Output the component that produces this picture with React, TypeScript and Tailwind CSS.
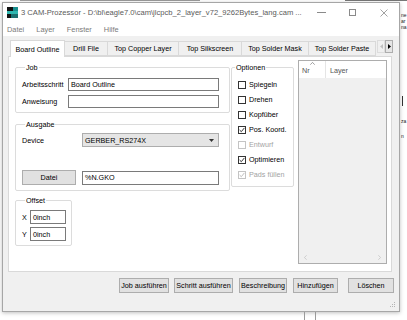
import React from 'react';

const font = "font-['Liberation_Sans',Arial,sans-serif]";

const tabs = [
  { label: 'Board Outline', w: 'w-[55px]', active: true },
  { label: 'Drill File', w: 'w-[43px]' },
  { label: 'Top Copper Layer', w: 'w-[71px]' },
  { label: 'Top Silkscreen', w: 'w-[63px]' },
  { label: 'Top Solder Mask', w: 'w-[67px]' },
  { label: 'Top Solder Paste', w: 'w-[67px]' },
];

const options = [
  { label: 'Spiegeln' },
  { label: 'Drehen' },
  { label: 'Kopfüber' },
  { label: 'Pos. Koord.', checked: true },
  { label: 'Entwurf', disabled: true },
  { label: 'Optimieren', checked: true },
  { label: 'Pads füllen', checked: true, disabled: true },
];

const CheckRow = ({ label, checked, disabled }: { label: string; checked?: boolean; disabled?: boolean }) => (
  <div className="flex items-center h-[15px] pl-[6px]">
    <div
      className={`w-[8px] h-[8px] border bg-white flex items-center justify-center ${
        disabled ? 'border-[#c4c4c4]' : 'border-[#333333]'
      }`}
    >
      {checked && (
        <svg width="6" height="6" viewBox="0 0 6 6">
          <path d="M0.6 3 L2.3 4.7 L5.4 0.9" fill="none" stroke={disabled ? '#b8b8b8' : '#222'} strokeWidth="0.9" />
        </svg>
      )}
    </div>
    <span className={`ml-[3px] ${disabled ? 'text-[#a3a3a3]' : 'text-black'}`}>{label}</span>
  </div>
);

const Group = ({ title, className, children }: { title: string; className?: string; children: React.ReactNode }) => (
  <fieldset className={`border border-[#dcdcdc] rounded-[2px] min-w-0 ${className ?? ''}`}>
    <legend className="ml-[3px] px-[1px] leading-[9px] text-black">{title}</legend>
    {children}
  </fieldset>
);

const Input = ({ value, className }: { value?: string; className: string }) => (
  <div className={`border border-[#7a7a7a] bg-white flex items-center pl-[2px] ${className}`}>{value}</div>
);

const Button = ({ label, className }: { label: string; className: string }) => (
  <div className={`h-[15px] border border-[#adadad] bg-[#e1e1e1] flex items-center justify-center ${className}`}>
    {label}
  </div>
);

export default function App() {
  return (
    <div className={`w-[407px] h-[320px] bg-white overflow-hidden flex flex-col text-[7.2px] leading-[9px] ${font}`}>
      {/* bits of the document behind, peeking out on top */}
      <div className="h-[2px] flex items-start">
        <div className="ml-[20px] w-[180px] h-[1px] bg-[#9a9a9a]" />
        <div className="ml-[145px] w-[62px] h-[1px] bg-[#777]" />
      </div>

      <div className="flex">
        <div className="w-[2px]" />

        {/* window */}
        <div className="w-[398px] h-[310px] border border-[#a6a6a6] bg-[#f0f0f0] flex flex-col shadow-[0_1px_4px_rgba(0,0,0,0.25)]">
          <div className="h-[19px] bg-white flex items-center">
            <svg className="ml-[4px]" width="11" height="11" viewBox="0 0 11 11">
              <rect x="0" y="0" width="6" height="4" fill="#111" />
              <rect x="6" y="0" width="5" height="4" fill="#1b8f8f" />
              <rect x="0" y="4" width="11" height="3" fill="#2fb7b0" />
              <rect x="0" y="7" width="4" height="4" fill="#111" />
              <rect x="4" y="7" width="7" height="4" fill="#1b6f6f" />
            </svg>
            <span className="ml-[3px] text-[7.6px] text-[#5a5a5a] whitespace-nowrap">
              3 CAM-Prozessor - D:\bl\eagle7.0\cam\jlcpcb_2_layer_v72_9262Bytes_lang.cam ...
            </span>
            <div className="flex-1" />
            <div className="w-[31px] flex justify-center">
              <div className="w-[9px] h-[1px] bg-[#8a8a8a]" />
            </div>
            <div className="w-[31px] flex justify-center">
              <div className="w-[7px] h-[7px] border border-[#8a8a8a]" />
            </div>
            <div className="w-[31px] flex justify-center">
              <svg width="8" height="8" viewBox="0 0 8 8">
                <path d="M0.5 0.5 L7.5 7.5 M7.5 0.5 L0.5 7.5" stroke="#8a8a8a" strokeWidth="0.8" />
              </svg>
            </div>
          </div>

          <div className="h-[14px] bg-white flex items-center text-[7.4px] text-[#7a7a7a]">
            <span className="ml-[4px]">Datei</span>
            <span className="ml-[12px]">Layer</span>
            <span className="ml-[12px]">Fenster</span>
            <span className="ml-[12px]">Hilfe</span>
          </div>

          {/* tabs */}
          <div className="h-[20px] flex items-end pl-[7px]">
            {tabs.map((t) =>
              t.active ? (
                <div
                  key={t.label}
                  className={`${t.w} h-[17px] -mb-[1px] bg-white border border-b-0 border-[#d9d9d9] flex items-center justify-center whitespace-nowrap relative z-10`}
                >
                  {t.label}
                </div>
              ) : (
                <div
                  key={t.label}
                  className={`${t.w} h-[15px] border border-l-0 border-[#d9d9d9] bg-[#f0f0f0] flex items-center justify-center whitespace-nowrap overflow-hidden`}
                >
                  {t.label}
                </div>
              )
            )}
            <div className="h-[15px] flex self-end mb-[1px] ml-[1px]">
              <div className="w-[8px] h-[13px] border border-[#dcdcdc] bg-[#f0f0f0] flex items-center justify-center">
                <svg width="3" height="5" viewBox="0 0 3 5">
                  <path d="M3 0 L0 2.5 L3 5 Z" fill="#c0c0c0" />
                </svg>
              </div>
              <div className="w-[8px] h-[13px] border border-[#adadad] bg-[#e5e5e5] flex items-center justify-center">
                <svg width="3" height="5" viewBox="0 0 3 5">
                  <path d="M0 0 L3 2.5 L0 5 Z" fill="#000" />
                </svg>
              </div>
            </div>
          </div>

          {/* tab panel */}
          <div className="ml-[5px] w-[384px] h-[216px] bg-white border border-[#d9d9d9] flex pt-[3px] pl-[6px]">
            <div className="w-[215px] mt-[3px] flex flex-col">
              <Group title="Job" className="pt-[6px] pb-[4px] pl-[6px]">
                <div className="flex items-center h-[13px]">
                  <span className="w-[46px]">Arbeitsschritt</span>
                  <Input value="Board Outline" className="w-[151px] h-[13px]" />
                </div>
                <div className="flex items-center h-[13px] mt-[4px]">
                  <span className="w-[46px]">Anweisung</span>
                  <Input className="w-[151px] h-[13px]" />
                </div>
              </Group>

              <Group title="Ausgabe" className="mt-[7px] pt-[4px] pb-[5px] pl-[6px]">
                <div className="flex items-center h-[14px]">
                  <span className="w-[60px]">Device</span>
                  <div className="w-[137px] h-[14px] border border-[#adadad] bg-[#e5e5e5] flex items-center pl-[2px]">
                    <span className="flex-1">GERBER_RS274X</span>
                    <svg className="mr-[4px]" width="5" height="3" viewBox="0 0 5 3">
                      <path d="M0 0 L5 0 L2.5 3 Z" fill="#333" />
                    </svg>
                  </div>
                </div>
                <div className="flex items-center h-[15px] mt-[23px]">
                  <Button label="Datei" className="w-[54px]" />
                  <Input value="%N.GKO" className="ml-[6px] w-[137px] h-[14px]" />
                </div>
              </Group>

              <Group title="Offset" className="w-[57px] mt-[5px] pt-[5px] pb-[4px] pl-[6px]">
                <div className="flex items-center h-[14px]">
                  <span className="w-[8px]">X</span>
                  <Input value="0inch" className="w-[36px] h-[14px]" />
                </div>
                <div className="flex items-center h-[14px] mt-[3px]">
                  <span className="w-[8px]">Y</span>
                  <Input value="0inch" className="w-[36px] h-[14px]" />
                </div>
              </Group>
            </div>

            <Group title="Optionen" className="w-[63px] h-fit mt-[3px] ml-[1px] pt-[5px] pb-[4px]">
              {options.map((o) => (
                <CheckRow key={o.label} {...o} />
              ))}
            </Group>

            {/* layer list */}
            <div className="ml-[4px] w-[89px] h-[204px] border border-[#adadad] bg-[#f0f0f0] flex flex-col">
              <div className="h-[17px] bg-white flex">
                <div className="w-[27px] border-r border-[#e5e5e5] flex flex-col pl-[3px]">
                  <svg className="ml-[8px] mt-[1px]" width="5" height="3" viewBox="0 0 5 3">
                    <path d="M0.3 2.7 L2.5 0.4 L4.7 2.7" fill="none" stroke="#777" strokeWidth="0.7" />
                  </svg>
                  <span className="mt-[1px] text-[#555]">Nr</span>
                </div>
                <div className="flex items-end pb-[3px] pl-[4px] text-[#555]">Layer</div>
              </div>
              <div className="flex-1" />
              <div className="h-[12px] flex items-center justify-between px-[5px] bg-[#f0f0f0]">
                <svg width="3" height="5" viewBox="0 0 3 5">
                  <path d="M2.7 0.3 L0.4 2.5 L2.7 4.7" fill="none" stroke="#c0c0c0" strokeWidth="0.7" />
                </svg>
                <svg width="3" height="5" viewBox="0 0 3 5">
                  <path d="M0.3 0.3 L2.6 2.5 L0.3 4.7" fill="none" stroke="#c0c0c0" strokeWidth="0.7" />
                </svg>
              </div>
            </div>
          </div>

          {/* buttons */}
          <div className="mt-[6px] flex justify-end pr-[5px]">
            <Button label="Job ausführen" className="w-[50px]" />
            <Button label="Schritt ausführen" className="w-[59px] ml-[5px]" />
            <Button label="Beschreibung" className="w-[48px] ml-[6px]" />
            <Button label="Hinzufügen" className="w-[45px] ml-[6px]" />
            <Button label="Löschen" className="w-[46px] ml-[10px]" />
          </div>

          <div className="flex-1 flex justify-end items-end pr-[3px] pb-[3px]">
            <svg width="6" height="6" viewBox="0 0 6 6">
              <rect x="4" y="0" width="1" height="1" fill="#b5b5b5" />
              <rect x="2" y="2" width="1" height="1" fill="#b5b5b5" />
              <rect x="4" y="2" width="1" height="1" fill="#b5b5b5" />
              <rect x="0" y="4" width="1" height="1" fill="#b5b5b5" />
              <rect x="2" y="4" width="1" height="1" fill="#b5b5b5" />
              <rect x="4" y="4" width="1" height="1" fill="#b5b5b5" />
            </svg>
          </div>
        </div>

        {/* background fragments on the right */}
        <div className="flex-1 flex flex-col pl-[1px] text-[5px] leading-[6px] text-[#222] whitespace-nowrap">
          <span className="mt-[10px]">ne</span>
          <span>ar</span>
          <span>na</span>
          <div className="mt-[66px] ml-[1px] w-[1px] h-[10px] bg-[#333]" />
          <span className="mt-[12px]">za</span>
          <span className="mt-[9px]">n</span>
        </div>
      </div>

      <div className="flex-1 flex">
        <div className="ml-[304px] w-[1px] bg-[#9a9a9a]" />
        <div className="ml-[10px] w-[1px] bg-[#9a9a9a]" />
      </div>
    </div>
  );
}
